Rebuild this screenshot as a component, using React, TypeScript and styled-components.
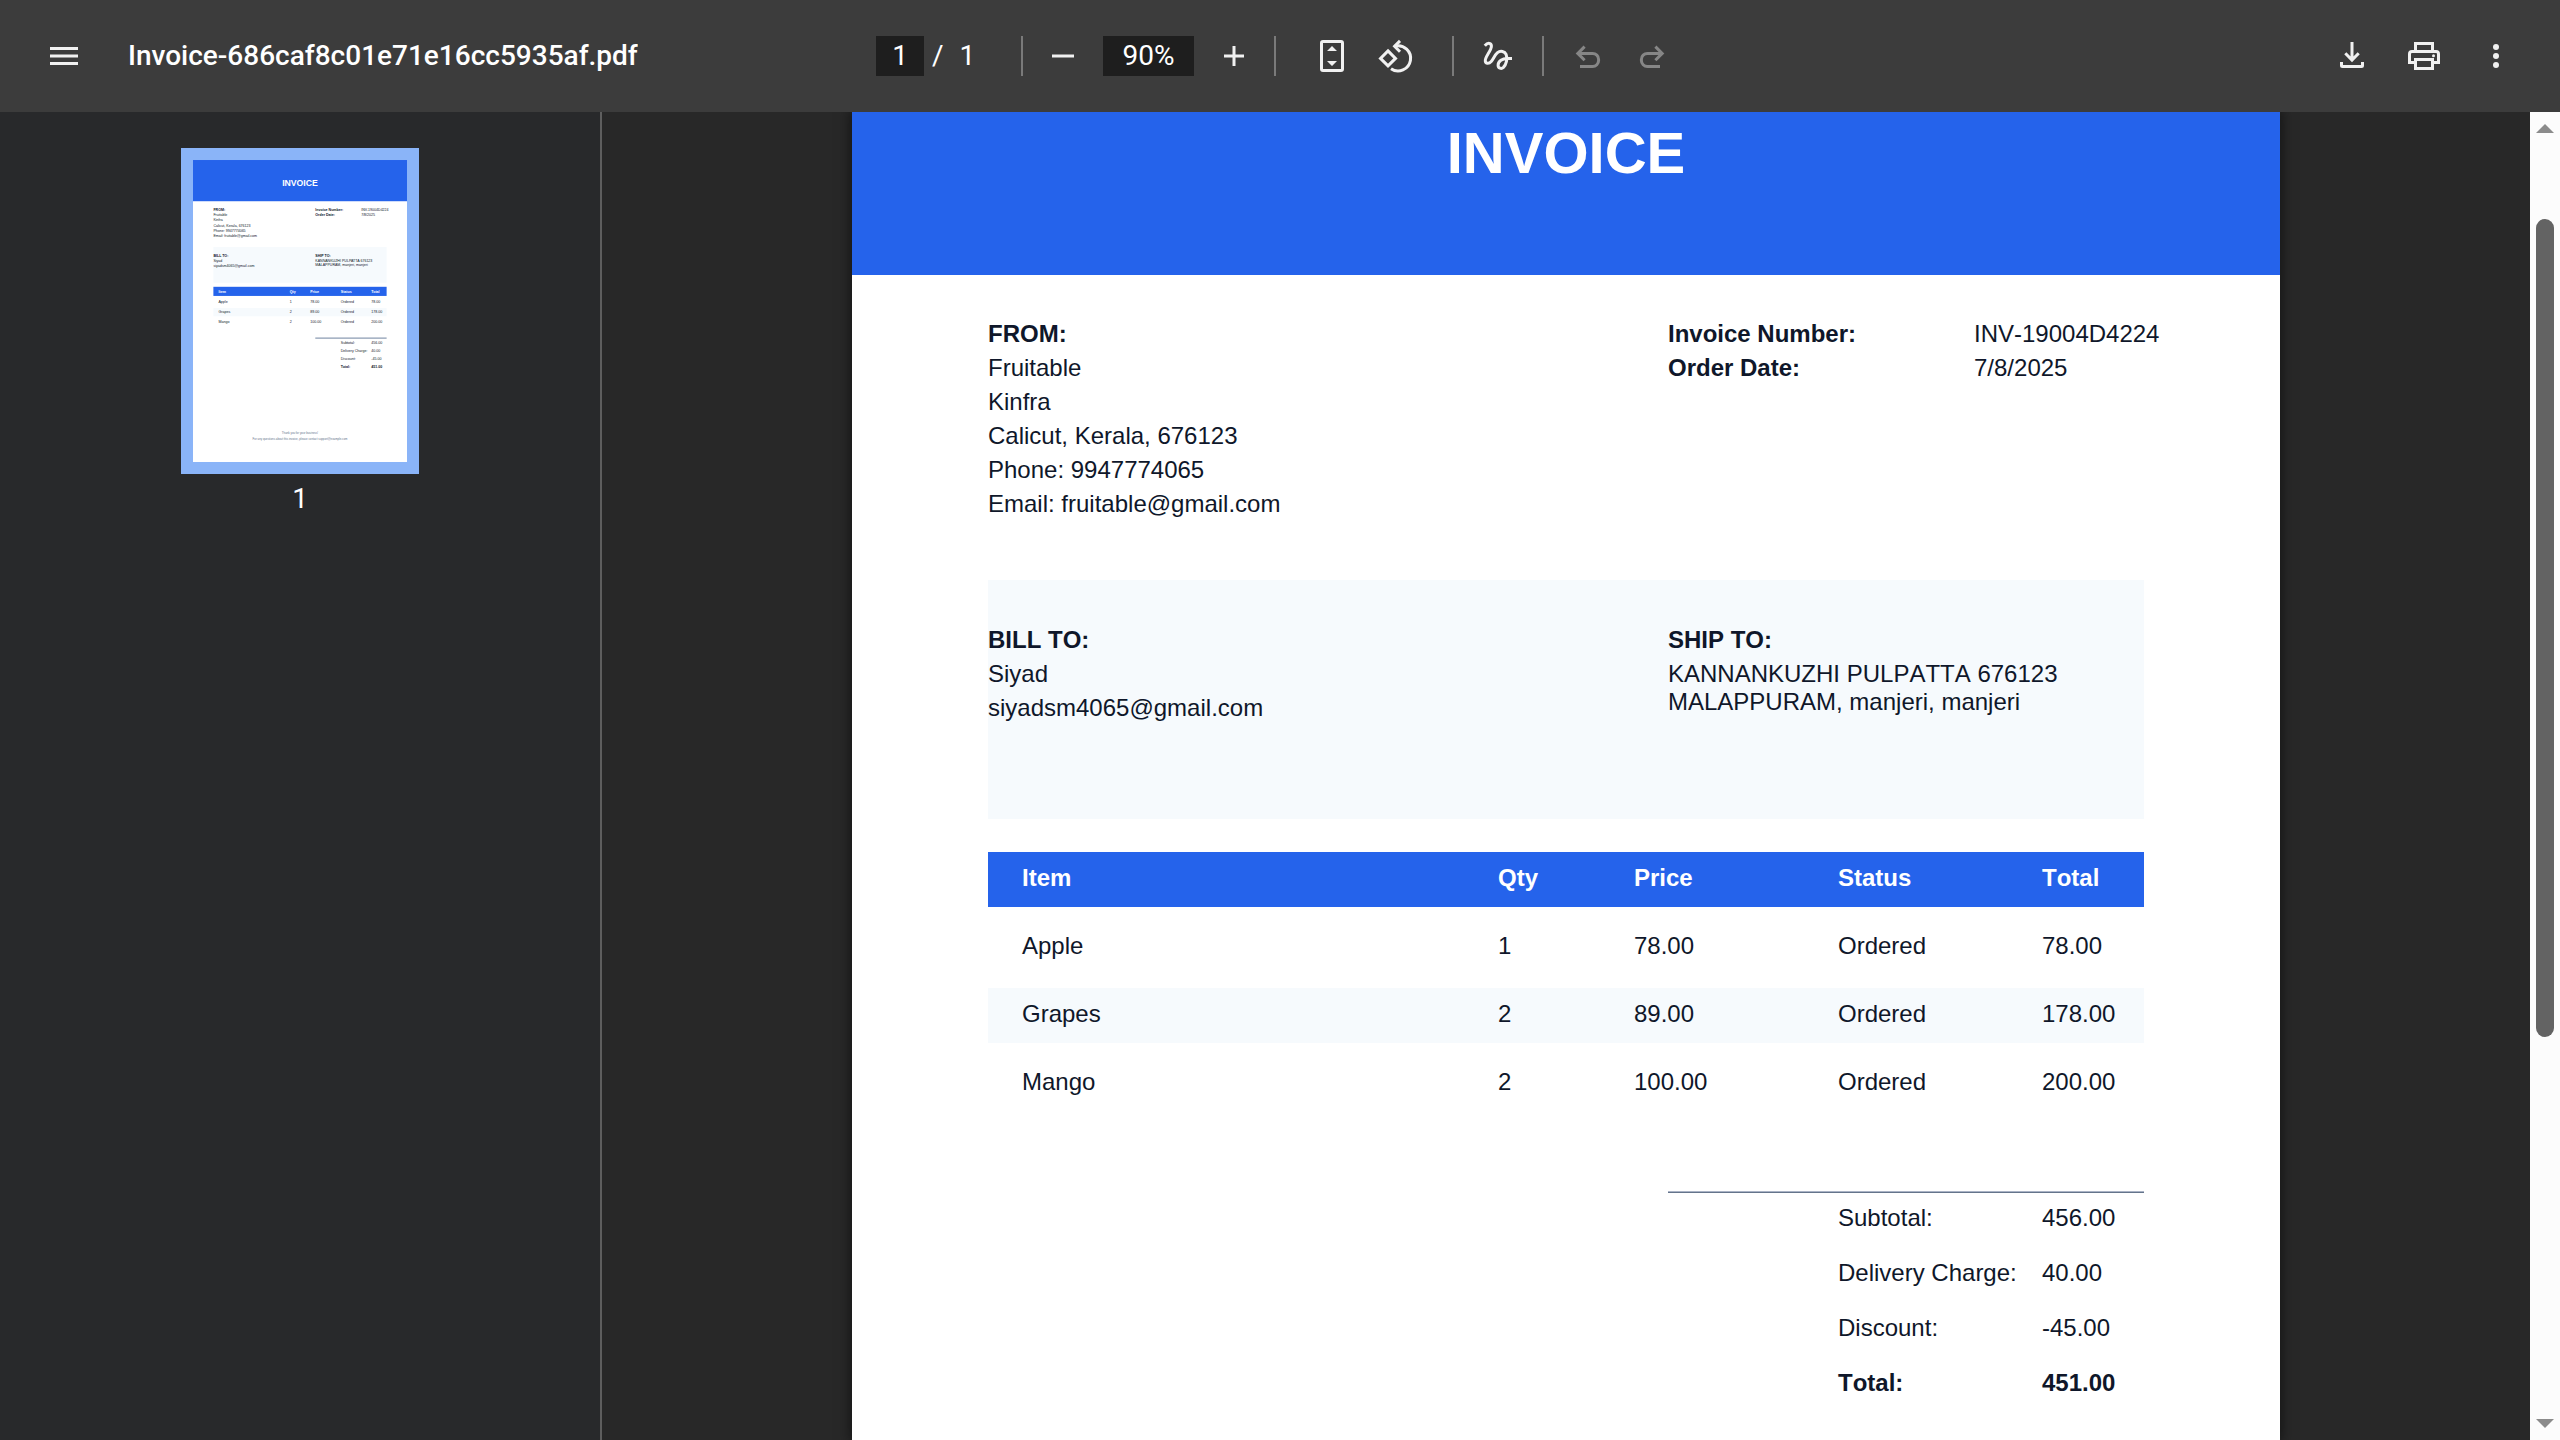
import React from "react";
import styled, { createGlobalStyle } from "styled-components";

const sans = `"Liberation Sans", Arial, sans-serif`;
const ui = `Roboto, "Noto Sans", sans-serif`;
const blue = "#2563eb";
const ink = "#0f172a";
const tint = "#f6fafd";

const GlobalStyle = createGlobalStyle`
  *, *::before, *::after { box-sizing: border-box; }
  body { margin: 0; background: #282828; }
`;

const Shell = styled.div`
  display: grid;
  grid-template-rows: 112px minmax(0, 1fr);
  height: 100vh;
  overflow: hidden;
  font-family: ${ui};
`;

/* ---------- toolbar ---------- */

const Toolbar = styled.header`
  display: flex;
  align-items: center;
  padding: 0 32px;
  background: #3c3c3c;
  color: #fff;
  font-size: 28px;
  line-height: 40px;
`;

const ToolbarStart = styled.div`
  display: flex;
  flex: 1 1 0;
  min-width: 0;
  align-items: center;
  gap: 32px;
`;

const ToolbarCenter = styled.div`
  display: flex;
  align-items: center;
`;

const ToolbarEnd = styled.div`
  display: flex;
  flex: 1 1 0;
  justify-content: flex-end;
  gap: 8px;
`;

const FileName = styled.h1`
  margin: 0;
  overflow: hidden;
  font-size: 28px;
  font-weight: 500;
  line-height: 40px;
  text-overflow: ellipsis;
  white-space: nowrap;
`;

const IconButton = styled.button`
  display: flex;
  width: 64px;
  height: 64px;
  align-items: center;
  justify-content: center;
  padding: 0;
  border: 0;
  border-radius: 50%;
  background: none;
  color: #f1f1f1;

  &:disabled {
    color: #868686;
  }
`;

const Group = styled.div<{ $pad: number }>`
  display: flex;
  align-items: center;
  gap: ${(p) => (p.$pad === 8 ? 8 : 0)}px;
  padding: 0 ${(p) => p.$pad}px;

  &:last-child {
    padding-right: 0;
  }
`;

const PageSelector = styled.div`
  display: flex;
  width: 145px;
  align-items: center;
`;

const PageCount = styled.span`
  display: flex;
  gap: 16px;
  padding-left: 8px;
`;

const Field = styled.input<{ $width: number }>`
  width: ${(p) => p.$width}px;
  height: 40px;
  padding: 0;
  border: 0;
  background: #1e1e1e;
  color: #fff;
  font-family: ${ui};
  font-size: 28px;
  line-height: 40px;
  text-align: center;
`;

const Rule = styled.span`
  width: 2px;
  height: 40px;
  background: #7a7a7a;
`;

const Glyph = ({ children }: { children: React.ReactNode }) => (
  <svg
    width="40"
    height="40"
    viewBox="0 0 40 40"
    fill="none"
    stroke="currentColor"
    strokeWidth="3"
    aria-hidden="true"
  >
    {children}
  </svg>
);

const MenuIcon = () => (
  <Glyph>
    <path d="M6 12.5h28M6 20h28M6 27.5h28" />
  </Glyph>
);
const MinusIcon = () => (
  <Glyph>
    <path d="M9 20h22" />
  </Glyph>
);
const PlusIcon = () => (
  <Glyph>
    <path d="M10 20h20M20 10v20" />
  </Glyph>
);
const FitIcon = () => (
  <Glyph>
    <rect x="9.5" y="5.5" width="21" height="29" rx="1.5" />
    <path d="M20 10l5 5H15zM20 30l5-5H15z" fill="currentColor" stroke="none" />
  </Glyph>
);
const RotateIcon = () => (
  <Glyph>
    <path d="M12 14.9l7.5 7.5-7.5 7.5-7.5-7.5z" />
    <path d="M24 4.9l-5.4 5.4 5.4 5.4" />
    <path d="M19 10.1A12.6 12.6 0 1 1 15 32.8" />
  </Glyph>
);
const InkIcon = () => (
  <Glyph>
    <path d="M6.8 9.8C8.8 7.4 10.6 7 12 7.6c2.6 1.4 1.2 5-.8 8.4C9 19.8 7 22.4 7.3 25c.3 2.8 3.6 3.1 5.9.5 2.4-2.8 3.4-6.5 6.3-8.9 3-2.4 7.3-1.3 8.6 1.7 1.8 4.3.1 10.2-2.7 13.1-2.1 2-5.3.8-5.3-2.2C20.1 25.2 24.6 22.4 29 22.4H34" />
  </Glyph>
);
const UndoIcon = () => (
  <Glyph>
    <path d="M16.6 10.6L9.8 17.4l6.8 6.8" />
    <path d="M10 17.4h14.6a6 6 0 0 1 6 6v1.1a6 6 0 0 1-6 6H12" />
  </Glyph>
);
const RedoIcon = () => (
  <Glyph>
    <path d="M23.4 10.6l6.8 6.8-6.8 6.8" />
    <path d="M30 17.4H15.4a6 6 0 0 0-6 6v1.1a6 6 0 0 0 6 6H28" />
  </Glyph>
);
const DownloadIcon = () => (
  <Glyph>
    <path d="M20 6v18M13.3 17.2l6.7 6.8 6.7-6.8" />
    <path d="M9.5 26v3.5a1 1 0 0 0 1 1h19a1 1 0 0 0 1-1V26" />
  </Glyph>
);
const PrintIcon = () => (
  <Glyph>
    <path d="M11.5 15V7.5h17V15" />
    <path d="M11.5 26.5h-6V18a2.5 2.5 0 0 1 2.5-2.5h24a2.5 2.5 0 0 1 2.5 2.5v8.500h-6" />
    <path d="M11.5 23.5h17v9h-17z" />
    <circle cx="29.5" cy="19.7" r="1.5" fill="currentColor" stroke="none" />
  </Glyph>
);
const MoreIcon = () => (
  <Glyph>
    <g fill="currentColor" stroke="none">
      <circle cx="20" cy="11" r="3" />
      <circle cx="20" cy="20" r="3" />
      <circle cx="20" cy="29" r="3" />
    </g>
  </Glyph>
);

/* ---------- body ---------- */

const Body = styled.div`
  display: grid;
  grid-template-columns: 602px minmax(0, 1fr) 30px;
  min-height: 0;
`;

const Sidebar = styled.nav`
  display: flex;
  flex-direction: column;
  align-items: center;
  padding-top: 36px;
  border-right: 2px solid #5e5e5e;
  background: #28292b;
`;

const ThumbButton = styled.button`
  display: flex;
  flex-direction: column;
  align-items: center;
  gap: 8px;
  padding: 0;
  border: 0;
  background: none;
  color: #fff;
  font-family: ${ui};
  font-size: 28px;
  line-height: 34px;
`;

const ThumbFrame = styled.span`
  display: block;
  border: 12px solid #8ab4f8;
  background: #fff;

  svg {
    display: block;
  }
`;

const Viewer = styled.main`
  display: flex;
  align-items: flex-start;
  justify-content: center;
  overflow: hidden;
  background: #282828;
`;

const Sheet = styled.article`
  width: 1428px;
  max-width: 100%;
  min-height: 100%;
  background: #fff;
  box-shadow: 0 0 12px 2px rgba(0, 0, 0, 0.5);
  color: ${ink};
  font-family: ${sans};
  font-kerning: none;
  font-size: 24px;
  line-height: 34px;
`;

const Banner = styled.div`
  padding: 9px 0 90px;
  background: ${blue};
  color: #fff;
  text-align: center;
`;

const Title = styled.h2`
  margin: 0;
  font-size: 58px;
  font-weight: 700;
  line-height: 64px;
`;

const Content = styled.div`
  padding: 0 136px;
`;

const Split = styled.section<{ $panel?: boolean }>`
  display: grid;
  grid-template-columns: 680px minmax(0, 1fr);
  min-height: ${(p) => (p.$panel ? 239 : 305)}px;
  align-items: start;
  padding-top: ${(p) => (p.$panel ? 43 : 42)}px;
  background: ${(p) => (p.$panel ? tint : "transparent")};
`;

const Address = styled.address`
  font-style: normal;
`;

const Line = styled.div`
  white-space: nowrap;
`;

const Wrapped = styled.div`
  padding-top: 3px;
  line-height: 28px;
`;

const Heading = styled.h3`
  margin: 0;
  font-size: 24px;
  font-weight: 700;
  line-height: 34px;
`;

const Facts = styled.dl`
  display: grid;
  grid-template-columns: 306px minmax(0, 1fr);
  margin: 0;
  white-space: nowrap;

  dt {
    font-weight: 700;
  }
  dd {
    margin: 0;
  }
`;

const Items = styled.table`
  width: 100%;
  margin: 20px 0 67px;
  border-spacing: 0 13px;
  table-layout: fixed;
`;

const Row = styled.tr<{ $fill?: string; $color?: string }>`
  background: ${(p) => p.$fill ?? "transparent"};
  color: ${(p) => p.$color ?? ink};

  th,
  td {
    height: 55px;
    padding: 9px 0 12px;
    line-height: 34px;
    text-align: left;
  }
  th:first-child,
  td:first-child {
    padding-left: 34px;
  }
`;

const Totals = styled.dl`
  display: grid;
  grid-template-columns: 204px 102px;
  row-gap: 21px;
  margin: 0 0 0 680px;
  padding: 9px 0 0 170px;
  border-top: 1px solid #aab3c5;
  box-shadow: inset 0 1px #64748b;
  white-space: nowrap;

  dd {
    margin: 0;
  }
`;

const Amount = styled.div<{ $strong?: boolean }>`
  display: contents;
  font-weight: ${(p) => (p.$strong ? 700 : 400)};
`;

/* ---------- scrollbar ---------- */

const Scrollbar = styled.div`
  display: flex;
  flex-direction: column;
  align-items: center;
  padding: 12px 0;
  background: #fcfcfc;
`;

const Arrow = styled.button<{ $down?: boolean }>`
  width: 18px;
  height: 9px;
  flex: none;
  padding: 0;
  border: 0;
  background: #8b8b8b;
  clip-path: ${(p) => (p.$down ? "polygon(0 0, 100% 0, 50% 100%)" : "polygon(50% 0, 100% 100%, 0 100%)")};
`;

const Track = styled.div`
  display: grid;
  width: 18px;
  flex: 1;
  grid-template-rows: 86fr 818fr 382fr;
`;

const Thumb = styled.div`
  grid-row: 2;
  border-radius: 9px;
  background: #636363;
`;

/* ---------- data ---------- */

const from = ["Fruitable", "Kinfra", "Calicut, Kerala, 676123", "Phone: 9947774065", "Email: fruitable@gmail.com"];
const billTo = ["Siyad", "siyadsm4065@gmail.com"];
const shipTo = ["KANNANKUZHI PULPATTA 676123", "MALAPPURAM, manjeri, manjeri"];
const facts = [
  ["Invoice Number:", "INV-19004D4224"],
  ["Order Date:", "7/8/2025"],
];
const columns = ["Item", "Qty", "Price", "Status", "Total"];
const columnWidths = [510, 136, 204, 204, 102];
const rows = [
  ["Apple", "1", "78.00", "Ordered", "78.00"],
  ["Grapes", "2", "89.00", "Ordered", "178.00"],
  ["Mango", "2", "100.00", "Ordered", "200.00"],
];
const totals = [
  ["Subtotal:", "456.00"],
  ["Delivery Charge:", "40.00"],
  ["Discount:", "-45.00"],
  ["Total:", "451.00"],
];

/* Miniature of the whole page, drawn in the page's own units. */
const Miniature = () => {
  const cols = [170, 646, 782, 986, 1190];
  return (
    <svg width="214" height="302" viewBox="0 0 1428 2015" fontFamily={sans} fontSize="24" fill={ink} aria-hidden="true">
      <rect width="1428" height="275" fill={blue} />
      <text x="714" y="172" fill="#fff" fontSize="58" fontWeight="700" textAnchor="middle">
        INVOICE
      </text>
      <text x="136" y="342" fontWeight="700">FROM:</text>
      {from.map((t, i) => (
        <text key={t} x="136" y={376 + i * 34}>{t}</text>
      ))}
      {facts.map(([k, v], i) => (
        <g key={k}>
          <text x="816" y={342 + i * 34} fontWeight="700">{k}</text>
          <text x="1122" y={342 + i * 34}>{v}</text>
        </g>
      ))}
      <rect x="136" y="580" width="1156" height="239" fill={tint} />
      <text x="136" y="648" fontWeight="700">BILL TO:</text>
      {billTo.map((t, i) => (
        <text key={t} x="136" y={682 + i * 34}>{t}</text>
      ))}
      <text x="816" y="648" fontWeight="700">SHIP TO:</text>
      {shipTo.map((t, i) => (
        <text key={t} x="816" y={682 + i * 28}>{t}</text>
      ))}
      <rect x="136" y="846" width="1156" height="61" fill={blue} />
      {columns.map((t, i) => (
        <text key={t} x={cols[i]} y="886" fill="#fff" fontWeight="700">{t}</text>
      ))}
      <rect x="136" y="988" width="1156" height="55" fill={tint} />
      {rows.map((r, y) => r.map((t, i) => (
        <text key={`${y}-${i}`} x={cols[i]} y={954 + y * 68}>{t}</text>
      )))}
      <rect x="816" y="1184" width="476" height="9" fill="#94a3b8" />
      {totals.map(([k, v], i) => (
        <g key={k} fontWeight={i === 3 ? 700 : 400}>
          <text x="986" y={1226 + i * 55}>{k}</text>
          <text x="1190" y={1226 + i * 55}>{v}</text>
        </g>
      ))}
      <g fill="#64748b" fontSize="19" textAnchor="middle">
        <text x="714" y="1828">Thank you for your business!</text>
        <text x="714" y="1868">For any questions about this invoice, please contact support@example.com</text>
      </g>
    </svg>
  );
};

export default function App() {
  return (
    <>
      <GlobalStyle />
      <Shell>
        <Toolbar>
          <ToolbarStart>
            <IconButton aria-label="Menu"><MenuIcon /></IconButton>
            <FileName>Invoice-686caf8c01e71e16cc5935af.pdf</FileName>
          </ToolbarStart>
          <ToolbarCenter>
            <PageSelector>
              <Field $width={48} aria-label="Page number" defaultValue="1" />
              <PageCount><span>/</span><span>1</span></PageCount>
            </PageSelector>
            <Rule />
            <Group $pad={8}>
              <IconButton aria-label="Zoom out"><MinusIcon /></IconButton>
              <Field $width={91} aria-label="Zoom level" defaultValue="90%" />
              <IconButton aria-label="Zoom in"><PlusIcon /></IconButton>
            </Group>
            <Rule />
            <Group $pad={24}>
              <IconButton aria-label="Fit to page"><FitIcon /></IconButton>
              <IconButton aria-label="Rotate counterclockwise"><RotateIcon /></IconButton>
            </Group>
            <Rule />
            <Group $pad={12}>
              <IconButton aria-label="Draw"><InkIcon /></IconButton>
            </Group>
            <Rule />
            <Group $pad={12}>
              <IconButton aria-label="Undo" disabled><UndoIcon /></IconButton>
              <IconButton aria-label="Redo" disabled><RedoIcon /></IconButton>
            </Group>
          </ToolbarCenter>
          <ToolbarEnd>
            <IconButton aria-label="Download"><DownloadIcon /></IconButton>
            <IconButton aria-label="Print"><PrintIcon /></IconButton>
            <IconButton aria-label="More actions"><MoreIcon /></IconButton>
          </ToolbarEnd>
        </Toolbar>

        <Body>
          <Sidebar aria-label="Page thumbnails">
            <ThumbButton>
              <ThumbFrame><Miniature /></ThumbFrame>
              1
            </ThumbButton>
          </Sidebar>

          <Viewer>
            <Sheet>
              <Banner><Title>INVOICE</Title></Banner>
              <Content>
                <Split>
                  <Address>
                    <Heading>FROM:</Heading>
                    {from.map((t) => <Line key={t}>{t}</Line>)}
                  </Address>
                  <Facts>
                    {facts.map(([k, v]) => (
                      <React.Fragment key={k}>
                        <dt>{k}</dt>
                        <dd>{v}</dd>
                      </React.Fragment>
                    ))}
                  </Facts>
                </Split>
                <Split $panel>
                  <Address>
                    <Heading>BILL TO:</Heading>
                    {billTo.map((t) => <Line key={t}>{t}</Line>)}
                  </Address>
                  <Address>
                    <Heading>SHIP TO:</Heading>
                    <Wrapped>
                      {shipTo.map((t) => <Line key={t}>{t}</Line>)}
                    </Wrapped>
                  </Address>
                </Split>
                <Items>
                  <colgroup>
                    {columnWidths.map((w, i) => <col key={i} style={{ width: w }} />)}
                  </colgroup>
                  <thead>
                    <Row $fill={blue} $color="#fff">
                      {columns.map((c) => <th key={c} scope="col">{c}</th>)}
                    </Row>
                  </thead>
                  <tbody>
                    {rows.map((r, y) => (
                      <Row key={r[0]} $fill={y % 2 ? tint : undefined}>
                        {r.map((t, i) => <td key={i}>{t}</td>)}
                      </Row>
                    ))}
                  </tbody>
                </Items>
                <Totals>
                  {totals.map(([k, v], i) => (
                    <Amount key={k} $strong={i === 3}>
                      <dt>{k}</dt>
                      <dd>{v}</dd>
                    </Amount>
                  ))}
                </Totals>
              </Content>
            </Sheet>
          </Viewer>

          <Scrollbar>
            <Arrow aria-label="Scroll up" />
            <Track><Thumb /></Track>
            <Arrow $down aria-label="Scroll down" />
          </Scrollbar>
        </Body>
      </Shell>
    </>
  );
}
